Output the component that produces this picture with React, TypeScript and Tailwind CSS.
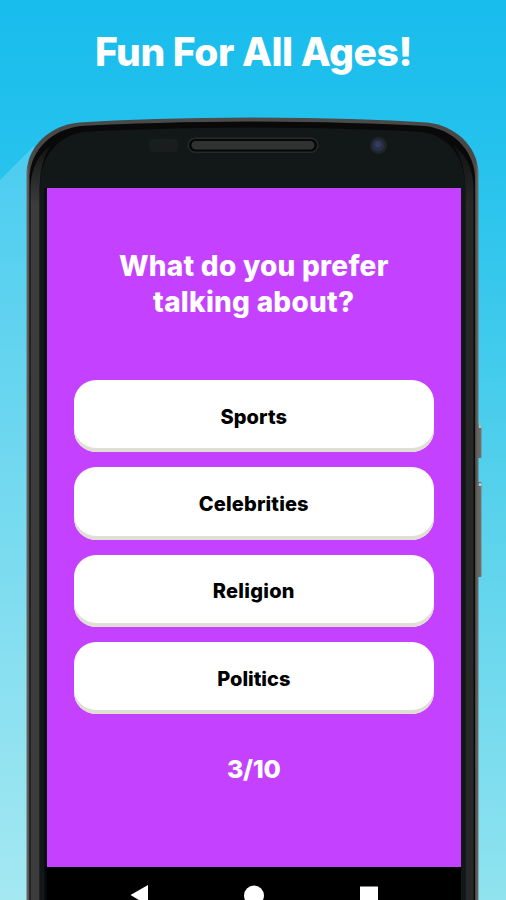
const options = [
    { label: 'Sports', text: 'tracking-[0.1px]' },
    { label: 'Celebrities', text: 'tracking-[0.15px]' },
    { label: 'Religion', text: 'tracking-[0.25px]' },
    { label: 'Politics', text: 'tracking-[0px]' },
]

function PhoneFrame() {
    return (
        <svg className="absolute inset-0" width="506" height="900" viewBox="0 0 506 900" fill="none">
            <defs>
                <linearGradient id="edge" x1="26" y1="0" x2="479" y2="0" gradientUnits="userSpaceOnUse">
                    <stop offset="0" stopColor="#707272" />
                    <stop offset="0.008" stopColor="#484848" />
                    <stop offset="0.5" stopColor="#4c4c4c" />
                    <stop offset="0.992" stopColor="#4a4745" />
                    <stop offset="1" stopColor="#7b7672" />
                </linearGradient>
                <linearGradient id="key" x1="0" y1="0" x2="1" y2="0">
                    <stop offset="0" stopColor="#505050" />
                    <stop offset="1" stopColor="#777" />
                </linearGradient>
                <linearGradient id="rail" x1="0" y1="146" x2="0" y2="205" gradientUnits="userSpaceOnUse">
                    <stop offset="0" stopColor="#121414" />
                    <stop offset="1" stopColor="#3c3c3c" />
                </linearGradient>
                <linearGradient id="rail-right" x1="0" y1="146" x2="0" y2="205" gradientUnits="userSpaceOnUse">
                    <stop offset="0" stopColor="#121414" />
                    <stop offset="1" stopColor="#272929" />
                </linearGradient>
            </defs>
            <path d="M0 180L34 146V900H0Z" fill="#fff" fillOpacity="0.18" />

            {/* side keys */}
            <rect x="477" y="425" width="4.5" height="33" rx="1" fill="url(#key)" />
            <rect x="477" y="482" width="4.5" height="95" rx="1" fill="url(#key)" />
            <circle cx="480" cy="426.5" r="1.5" fill="#b4c8ce" />
            <circle cx="480" cy="484.5" r="1.5" fill="#c4d4d8" />

            {/* body */}
            <path
                d="M26.500 900V172C28 145 51 125 79 122.500Q145 118 253 117.500Q361 118 427 122.500C454 125 477 145 478.500 172V900Z"
                fill="url(#edge)"
            />
            <path
                d="M29.500 900V176C31 149 53 129 81 126Q150 122 253 121.500Q356 122 425 126C452 129 473 149 475 176V900Z"
                fill="#090909"
            />
            <path d="M30.500 900V188Q31 172 37 161Q42 152 50 146Q40 162 39.500 188V900Z" fill="url(#rail)" />
            <path d="M473.500 900V188Q473 172 467 161Q462 152 454 146Q465 162 465.500 188V900Z" fill="url(#rail-right)" />
            <path
                d="M40 900V184C41 157 56 137 83 132Q150 128 253 127.500Q356 128 423 132C449 137 464 157 465 184V900Z"
                fill="#121717"
            />
            <path d="M44.500 188H47.500V900H44.500Z" fill="#07080b" />

            {/* sensor, earpiece and camera */}
            <rect x="149" y="139" width="29" height="13" rx="4" fill="#191d1d" />
            <rect x="187.500" y="137.500" width="131" height="15.500" rx="7.700" fill="#262a2a" />
            <rect x="189" y="139" width="128" height="12.500" rx="6.200" fill="#060707" />
            <rect x="191.500" y="141" width="123" height="8.500" rx="4.200" fill="#303232" />
            <circle cx="378.500" cy="145.500" r="8.500" fill="#202529" />
            <circle cx="378" cy="145.500" r="6" fill="#292f48" />
            <circle cx="378" cy="144.500" r="3" fill="#343c5e" />
        </svg>
    )
}

export default function App() {
    return (
        <main className="relative w-[506px] h-[900px] overflow-hidden bg-[linear-gradient(180deg,#18bcec_0%,#25c2ed_17%,#52d0ec_52%,#90e3ef_100%)] font-['Inter','Liberation_Sans',sans-serif]">
            <PhoneFrame />
            <div className="relative flex flex-col h-full">
                <h1 className="h-[188.4px] shrink-0 pt-7 pl-px text-center text-[39px] leading-[48px] font-extrabold tracking-[-0.45px] text-white">
                    Fun For All Ages!
                </h1>
                <section className="w-[413.6px] h-[679px] shrink-0 ml-[47.4px] pl-[26.4px] pr-[27.2px] pt-[60px] flex flex-col bg-[#c441ff]">
                    <h2 className="h-[131.6px] shrink-0 text-center text-[28px] leading-9 font-extrabold tracking-[0.25px] text-white">
                        What do you prefer
                        <br />
                        talking about?
                    </h2>
                    <div className="flex flex-col gap-[15px]">
                        {options.map((option) => (
                            <button
                                key={option.label}
                                className="h-[72.3px] pt-px rounded-[22px] bg-white text-[20px] font-extrabold text-black shadow-[inset_0_-4px_0_#dfdfd3]"
                            >
                                <span className={option.text}>{option.label}</span>
                            </button>
                        ))}
                    </div>
                    <p className="mt-[39px] text-center text-[25px] leading-8 font-extrabold tracking-[-0.3px] text-white">
                        3/10
                    </p>
                </section>
                <nav className="w-[413.6px] ml-[47.4px] grow bg-black">
                    <svg width="413" height="33" viewBox="0 0 413 33" fill="#fff">
                        <path d="M83.500 28L101 18V38.500Z" />
                        <circle cx="207" cy="28.500" r="10" />
                        <rect x="313" y="19.500" width="18" height="18" />
                    </svg>
                </nav>
            </div>
        </main>
    )
}
